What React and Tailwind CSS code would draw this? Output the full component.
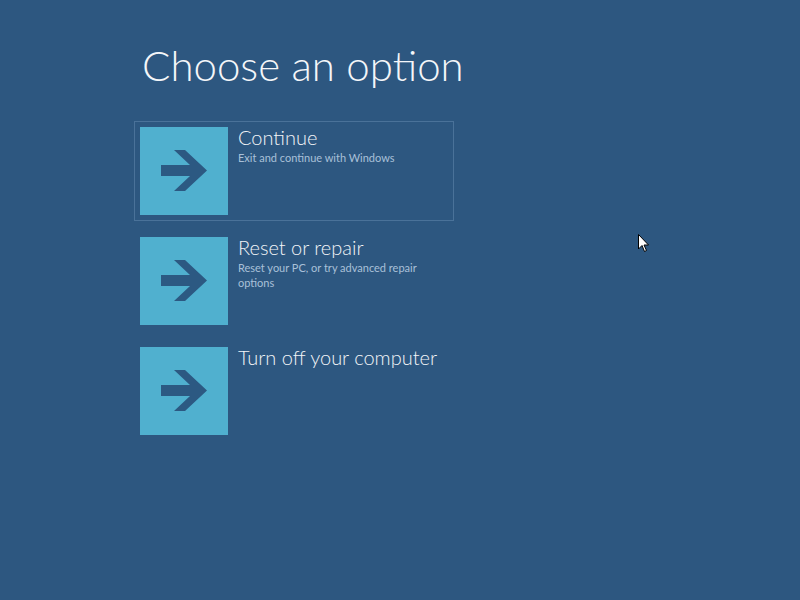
import React from "react";

function Arrow() {
  return (
    <svg width="88" height="88" viewBox="0 0 88 88" className="block">
      <polygon
        points="21,38 50,38 34,23 45,23 67,43.5 45,64 34,64 50,49 21,49"
        fill="#2c5982"
      />
    </svg>
  );
}

function Option({ title, sub, focused }) {
  return (
    <div
      className={`flex w-[320px] h-[100px] p-[5px] border ${
        focused ? "border-[#4a7299]" : "border-transparent"
      }`}
    >
      <div className="w-[88px] h-[88px] bg-[#50b0cf] shrink-0">
        <Arrow />
      </div>
      <div className="ml-[10px] w-[212px] -mt-[2px]">
        <div className="text-[20px] leading-[24px] font-light text-[#f2f4f7] whitespace-nowrap">{title}</div>
        {sub && (
          <div className="text-[11px] leading-[15px] text-[#a9c0d8] mt-[1px] pr-[20px]">{sub}</div>
        )}
      </div>
    </div>
  );
}

export default function App() {
  return (
    <div
      className="relative w-[800px] h-[600px] bg-[#2d5780] overflow-hidden"
      style={{ fontFamily: 'Lato, "Open Sans", sans-serif' }}
    >
      <div className="pl-[142px] pt-[35px]">
        <div className="text-[42px] leading-[60px] font-light text-[#f4f6f9]">
          Choose an option
        </div>
      </div>
      <div className="pl-[134px] pt-[26px] flex flex-col gap-[10px]">
        <Option title="Continue" sub="Exit and continue with Windows" focused />
        <Option title="Reset or repair" sub="Reset your PC, or try advanced repair options" />
        <Option title="Turn off your computer" />
      </div>
      <svg
        className="absolute left-[638px] top-[234px]"
        width="12"
        height="19"
        viewBox="0 0 12 19"
      >
        <path d="M0.5 0.5 L0.5 15 L4 11.5 L6.5 17.5 L8.5 16.5 L6 11 L10.5 11 Z" fill="#fff" stroke="#000" strokeWidth="1" />
      </svg>
    </div>
  );
}
